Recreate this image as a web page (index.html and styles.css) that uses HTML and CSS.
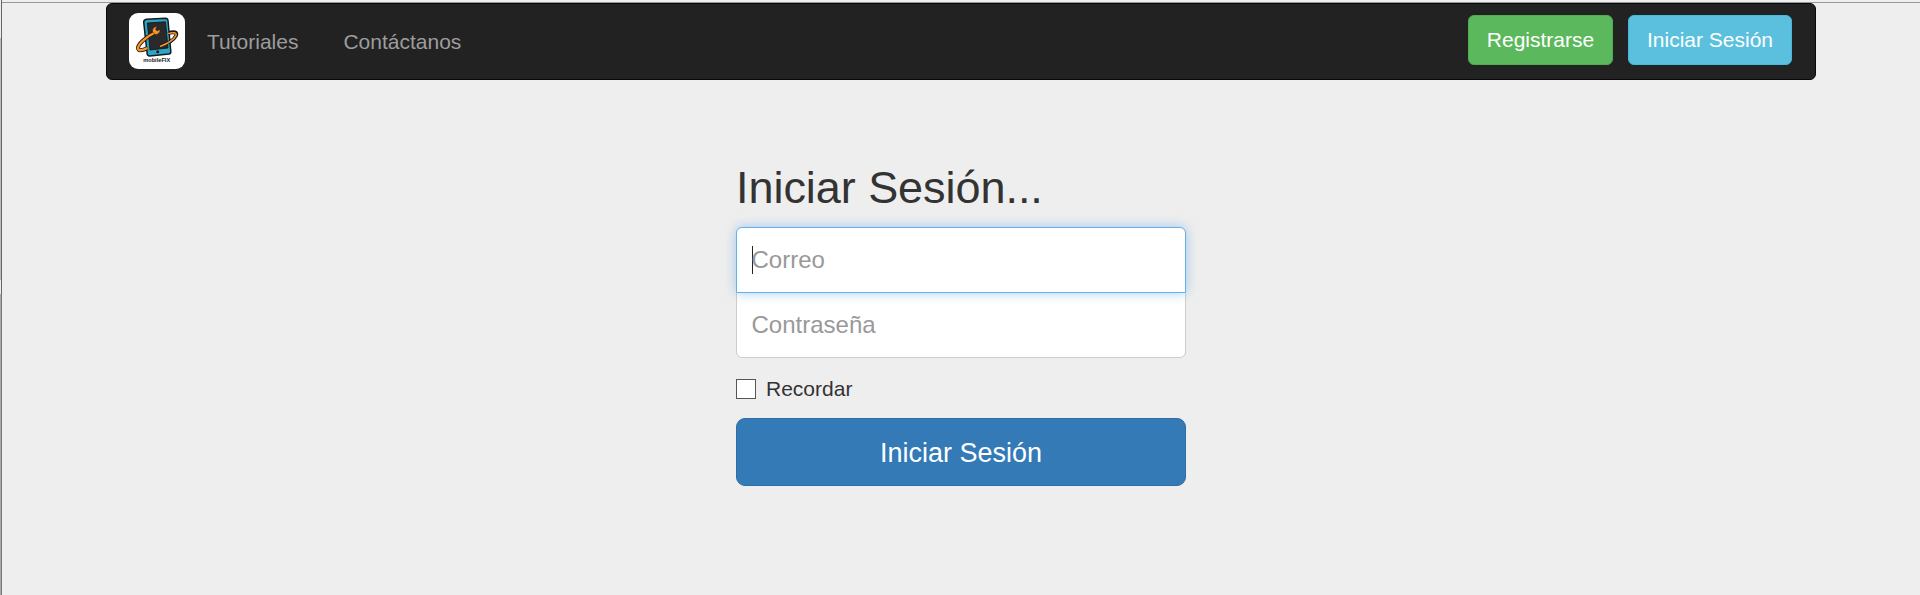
FILE: index.html
```html
<!DOCTYPE html>
<html lang="es">
<head>
<meta charset="utf-8">
<title>mobileFIX</title>
<link rel="stylesheet" href="styles.css">
</head>
<body>
<div class="page">
  <nav class="navbar">
    <a class="brand">
      <svg class="logo" viewBox="0 0 56 56">
        <rect width="56" height="56" rx="9" fill="#fff"/>
        <path d="M39 20C45 17.8 49 19 47.3 22.5C45 27 39 31 30 34" fill="none" stroke="#20160d" stroke-width="3.2"/>
        <path d="M17.5 6.2L36.5 5.2Q38.8 5.2 39 7.5L41.8 38.5Q42 40.7 39.8 41L20.8 43Q18.5 43 18.2 41L14.7 9.2Q14.7 6.6 17.5 6.2Z" fill="#2fa5c3" stroke="#101c22" stroke-width="1.5"/>
        <path d="M18.3 10L36.5 8.8L39 35L21 37Z" fill="#2a2a2c" stroke="#111" stroke-width=".8"/>
        <path d="M31 33.5C39 30.5 45 26.5 47 22.4C48 19.5 44 19 39 20.6" fill="none" stroke="#20160d" stroke-width="3"/>
        <path d="M31 33.5C39 30.5 45 26.5 47 22.4C48 19.5 44 19 39 20.6" fill="none" stroke="#f09a35" stroke-width="1.5"/>
        <path d="M26 19.5C18 23.5 10 30 9 34.5C8.6 38.5 13 37.6 18.5 35.2" fill="none" stroke="#20160d" stroke-width="4"/>
        <path d="M26 19.5C18 23.5 10 30 9 34.5C8.6 38.5 13 37.6 18.5 35.2" fill="none" stroke="#f9952b" stroke-width="2.4"/>
        <path d="M23.5 18.5Q23.3 13.6 28 13.4L26.4 16.2L28.2 17.9L31 16.4Q31.2 21 26.4 21.6Z" fill="#f9952b" stroke="#20160d" stroke-width=".4"/>
        <circle cx="28.7" cy="38.7" r="1.5" fill="#101820"/>
        <text class="logo-name" x="14.2" y="49" textLength="27" lengthAdjust="spacingAndGlyphs">mobileFIX</text>
      </svg>
    </a>
    <a class="nav-link">Tutoriales</a>
    <a class="nav-link">Contáctanos</a>
    <div class="nav-actions">
      <button class="btn btn-success">Registrarse</button>
      <button class="btn btn-info">Iniciar Sesión</button>
    </div>
  </nav>
  <form class="signin">
    <h2 class="title">Iniciar Sesión...</h2>
    <div class="field field-email"><span class="caret"></span>Correo</div>
    <div class="field field-password">Contraseña</div>
    <label class="remember"><span class="checkbox"></span>Recordar</label>
    <button class="btn btn-primary" type="button">Iniciar Sesión</button>
  </form>
</div>
</body>
</html>
```
FILE: styles.css
```css
* { box-sizing: border-box; }
body {
  margin: 0;
  background: #eee;
  color: #333;
  font: 21px/30px "Liberation Sans", Arial, sans-serif;
}
.page {
  height: 595px;
  padding-top: 3px;
  overflow: hidden;
  background:
    linear-gradient(#999, #999) 2px 2px / 100% 1px no-repeat,
    linear-gradient(#666, #666) 1px 0 / 1px 294px no-repeat,
    linear-gradient(#777, #777) 1px 294px / 1px 301px no-repeat,
    linear-gradient(#eee 38px, #bbb 38px, #bbb 280px, #eee 280px, #eee 294px, #aaa 294px) 0 0 / 1px 100% no-repeat,
    #eee;
}
.navbar {
  display: flex;
  align-items: flex-start;
  width: 1710px;
  height: 77px;
  margin-left: 106px;
  padding: 9px 23px 0 22px;
  background: #222;
  border: 1px solid #080808;
  border-radius: 6px;
}
.brand { display: block; height: 56px; }
.logo { display: block; width: 56px; height: 56px; }
.logo-name { font: bold 5px "Liberation Sans", Arial, sans-serif; fill: #222; }
.nav-link { color: #9d9d9d; padding: 14px 23px 0 22px; }
.nav-link + .nav-link { padding-left: 22px; }
.nav-actions { display: flex; gap: 15px; margin: 2px 0 0 auto; }
.btn {
  font: inherit;
  color: #fff;
  border: 1px solid;
  border-radius: 6px;
  padding: 0;
}
.btn-success { width: 145px; height: 50px; background: #5cb85c; border-color: #4cae4c; }
.btn-info { width: 164px; height: 50px; background: #5bc0de; border-color: #46b8da; }
.signin { display: flex; flex-direction: column; width: 450px; margin: 83px 0 0 736px; }
.title { margin: 0 0 14px; font-size: 45px; line-height: 50px; font-weight: 400; letter-spacing: -.05px; }
.field {
  display: flex;
  align-items: center;
  height: 66px;
  padding: 0 15px 0 14.5px;
  background: #fff;
  border: 1px solid #ccc;
  color: #999;
  font-size: 24px;
}
.field-email {
  position: relative;
  z-index: 1;
  border-color: #66afe9;
  border-radius: 6px 6px 0 0;
  box-shadow: 0 0 12px rgba(102, 175, 233, .6);
}
.field-password { margin-top: -1px; border-radius: 0 0 6px 6px; }
.caret { width: 1px; height: 28px; margin-right: -1px; background: #222; }
.remember { display: flex; align-items: center; gap: 10px; height: 30px; margin: 16px 0 14px; }
.checkbox { width: 20px; height: 20px; background: #fff; border: 1px solid #555; }
.btn-primary {
  height: 68px;
  padding-top: 1px;
  background: #337ab7;
  border-color: #2e6da4;
  border-radius: 9px;
  font-size: 27px;
}
```
